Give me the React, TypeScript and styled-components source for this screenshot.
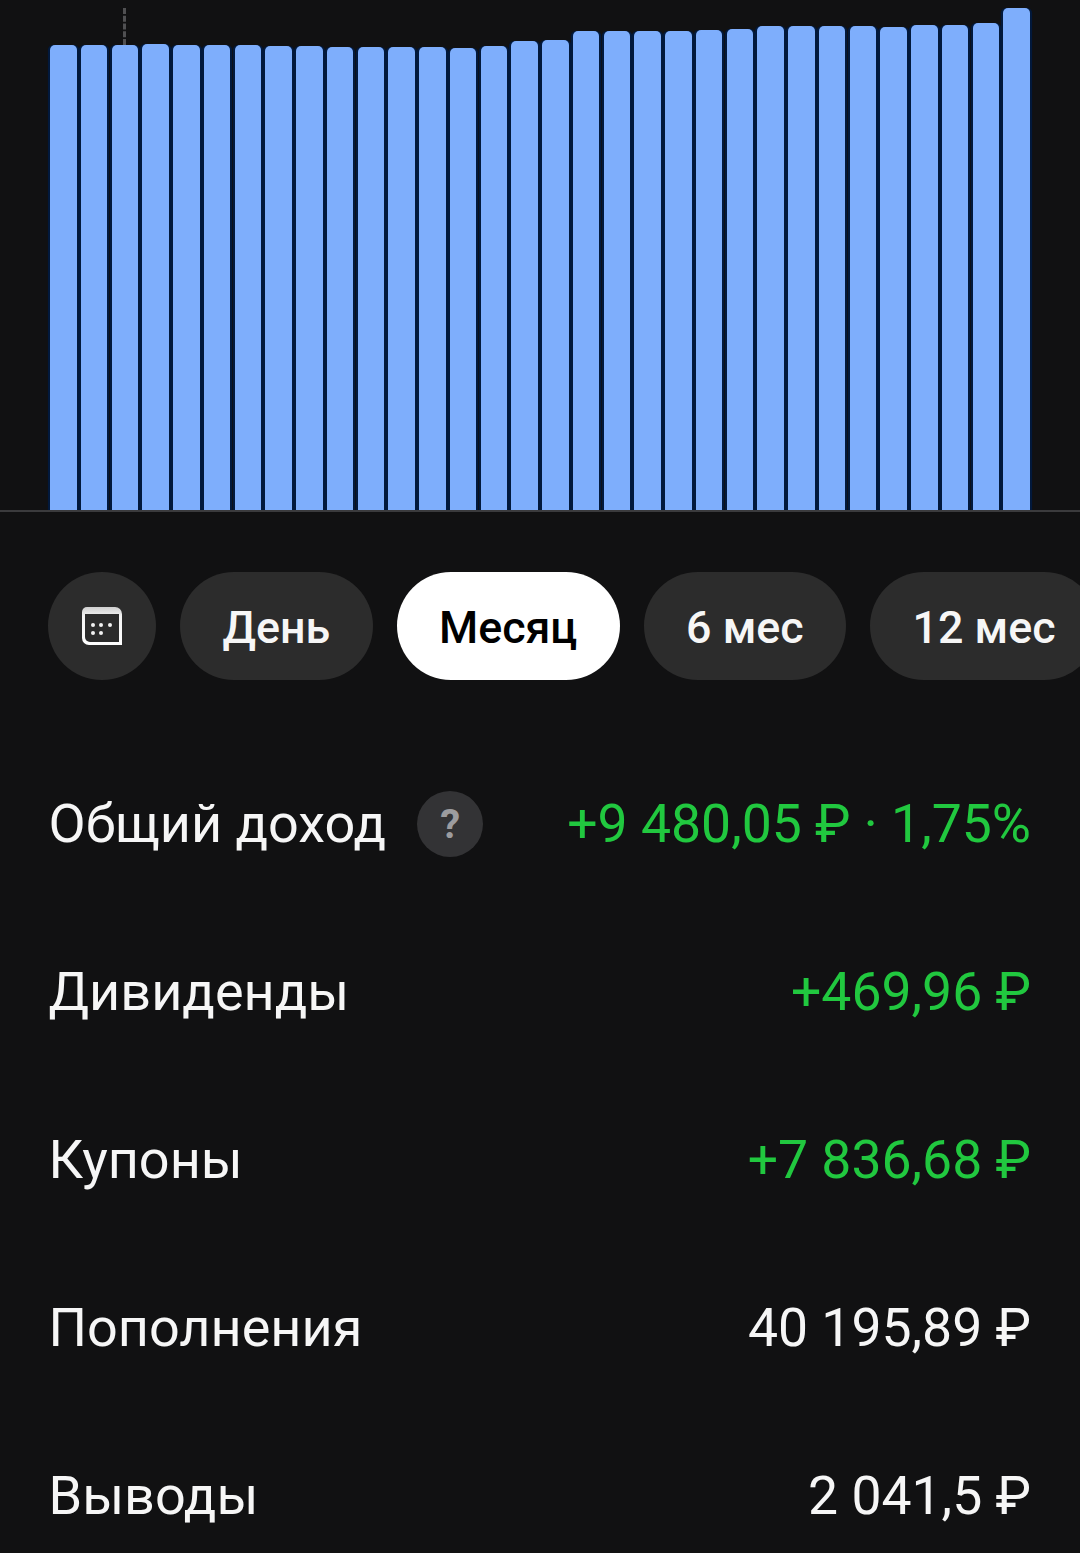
import React from 'react';
import styled, { createGlobalStyle } from 'styled-components';

const GlobalStyle = createGlobalStyle`
  html, body {
    margin: 0;
    padding: 0;
    background: #111112;
  }
  body {
    font-family: Roboto, "Liberation Sans", sans-serif;
    color: #f6f6f6;
  }
`;

const Screen = styled.div`
  width: 1080px;
  height: 1553px;
  overflow: hidden;
  background: #111112;
`;

const Chart = styled.div`
  position: relative;
  height: 510px;
  padding: 0 50px;
  box-sizing: border-box;
  display: flex;
  align-items: flex-end;
  justify-content: space-between;
`;

const Bar = styled.div<{ $height: number }>`
  width: 26.6px;
  height: ${(p) => p.$height}px;
  background: #7eaefc;
  border-radius: 5px 5px 0 0;
  box-shadow: 2.1px 0 0 #02193c, -2.1px 0 0 #02193c;
`;

const Marker = styled.div`
  position: absolute;
  left: 122.5px;
  top: 8px;
  height: 37px;
  border-left: 3px dashed #505052;
`;

const Axis = styled.div`
  height: 2px;
  background: #3b3b3d;
`;

const ChipRow = styled.div`
  display: flex;
  gap: 24px;
  margin-top: 60px;
  padding-left: 48px;
  height: 108px;
`;

const Chip = styled.div<{ $active?: boolean }>`
  flex: none;
  height: 108px;
  padding: 2px 42.4px 0;
  box-sizing: border-box;
  display: flex;
  align-items: center;
  border-radius: 54px;
  font-size: 44.8px;
  font-weight: 500;
  background: ${(p) => (p.$active ? '#ffffff' : '#2c2c2c')};
  color: ${(p) => (p.$active ? '#000000' : '#f6f6f6')};
`;

const IconChip = styled(Chip)`
  width: 108px;
  padding: 0;
  justify-content: center;
`;

const Rows = styled.div`
  margin-top: 59px;
  padding: 0 49px 0 48.5px;
`;

const Row = styled.div`
  height: 168px;
  display: flex;
  align-items: center;
  justify-content: space-between;
`;

const RowLabel = styled.div`
  display: flex;
  align-items: center;
  gap: 31px;
  font-size: 54px;
`;

const HelpBadge = styled.div`
  width: 66px;
  height: 66px;
  margin-top: 2px;
  border-radius: 50%;
  background: #333335;
  color: #9c9c9f;
  font-size: 40px;
  font-weight: 700;
  display: flex;
  align-items: center;
  justify-content: center;
`;

const RowValue = styled.div<{ $positive?: boolean }>`
  font-size: 53.5px;
  color: ${(p) => (p.$positive ? '#21c83f' : '#f6f6f6')};
`;

const barHeights = [
  465, 465, 465, 466, 465, 465, 465, 464, 464, 463, 463, 463, 463, 462, 464, 469,
  470, 479, 479, 479, 479, 480, 481, 484, 484, 484, 484, 483, 485, 485, 487, 502
];

const rows = [
  { label: 'Дивиденды', value: '+469,96 ₽', positive: true },
  { label: 'Купоны', value: '+7 836,68 ₽', positive: true },
  { label: 'Пополнения', value: '40 195,89 ₽' },
  { label: 'Выводы', value: '2 041,5 ₽' }
];

const CalendarIcon = () => (
  <svg width="40" height="38" viewBox="0 0 40 38">
    <defs>
      <linearGradient id="calendarFrame" x1="0" y1="0" x2="0" y2="1">
        <stop offset="0" stopColor="#cfcfcf" />
        <stop offset="0.25" stopColor="#f4f4f4" />
        <stop offset="1" stopColor="#ffffff" />
      </linearGradient>
    </defs>
    <path
      d="M5 0H33a7 7 0 0 1 7 7V38H7a7 7 0 0 1-7-7V5a5 5 0 0 1 5-5Z"
      fill="url(#calendarFrame)"
    />
    <path d="M3 7H37V35H8a5 5 0 0 1-5-5Z" fill="#2c2c2c" />
    <circle cx="11" cy="18" r="2" fill="#f2f2f2" />
    <circle cx="19" cy="18" r="2" fill="#f2f2f2" />
    <circle cx="28" cy="18" r="2" fill="#f2f2f2" />
    <circle cx="11" cy="26" r="2" fill="#f2f2f2" />
    <circle cx="19" cy="26" r="2" fill="#f2f2f2" />
  </svg>
);

const App: React.FC = () => {
  return (
    <Screen>
      <GlobalStyle />
      <Chart>
        {barHeights.map((height, i) => (
          <Bar key={i} $height={height} />
        ))}
        <Marker />
      </Chart>
      <Axis />
      <ChipRow>
        <IconChip>
          <CalendarIcon />
        </IconChip>
        <Chip>День</Chip>
        <Chip $active>Месяц</Chip>
        <Chip>6 мес</Chip>
        <Chip>12 мес</Chip>
      </ChipRow>
      <Rows>
        <Row>
          <RowLabel>
            Общий доход
            <HelpBadge>?</HelpBadge>
          </RowLabel>
          <RowValue $positive>+9 480,05 ₽ · 1,75%</RowValue>
        </Row>
        {rows.map((row) => (
          <Row key={row.label}>
            <RowLabel>{row.label}</RowLabel>
            <RowValue $positive={row.positive}>{row.value}</RowValue>
          </Row>
        ))}
      </Rows>
    </Screen>
  );
};

export default App;
